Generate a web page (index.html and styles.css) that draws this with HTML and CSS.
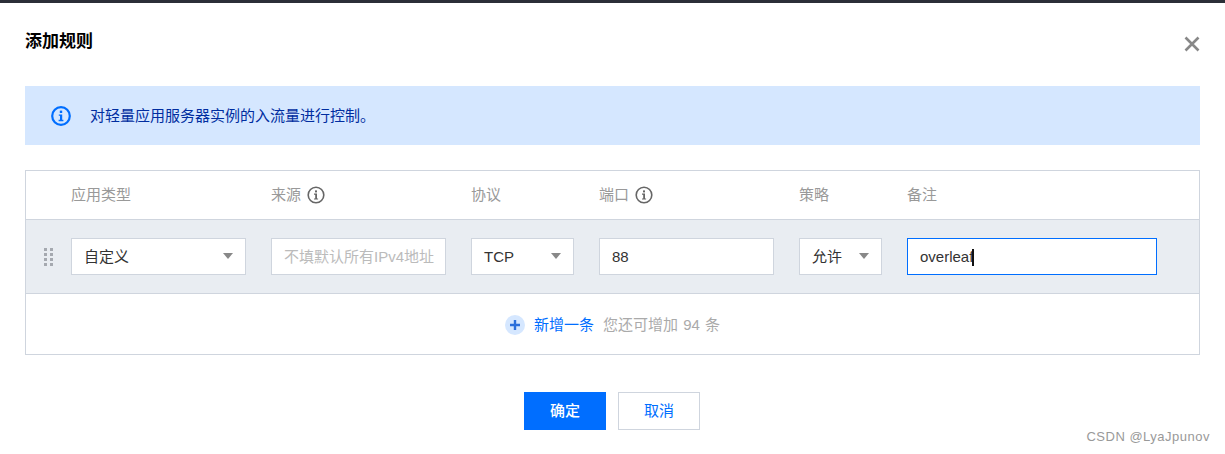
FILE: index.html
```html
<!doctype html>
<html>
	<head>
		<meta charset="utf-8" />
		<title>添加规则</title>
		<link rel="stylesheet" href="styles.css">
	</head>
	<body>
		<div class="topbar"></div>
		<div class="dialog">
			<div class="dialog-head">
				<h3>添加规则</h3>
				<svg class="close" width="16" height="16" viewBox="0 0 16 16"><path d="M1.5 1.5l13 13M14.5 1.5l-13 13" fill="none" stroke="#888" stroke-width="2.6"/></svg>
			</div>
			<div class="alert">
				<svg class="alert-icon" width="20" height="20" viewBox="0 0 20 20"><circle cx="10" cy="10" r="8.8" fill="none" stroke="#006eff" stroke-width="2.2"/><rect x="8.8" y="4.6" width="2.4" height="2.4" fill="#006eff"/><path d="M7.8 8.4h3.4v5.4h1.2v1.4H7.6v-1.4h1.4V9.8H7.8z" fill="#006eff"/></svg>
				<span>对轻量应用服务器实例的入流量进行控制。</span>
			</div>
			<div class="rules">
				<div class="line line-head">
					<div class="col col-type">应用类型</div>
					<div class="col col-source">来源
						<svg class="tip" width="18" height="18" viewBox="0 0 18 18"><circle cx="9" cy="9" r="7.8" fill="none" stroke="#666" stroke-width="1.6"/><rect x="8" y="4.4" width="2" height="2" fill="#666"/><path d="M7 7.6h3v4.8h1.1v1.2H7v-1.2h1.2V8.8H7z" fill="#666"/></svg>
					</div>
					<div class="col col-proto">协议</div>
					<div class="col col-port">端口
						<svg class="tip" width="18" height="18" viewBox="0 0 18 18"><circle cx="9" cy="9" r="7.8" fill="none" stroke="#666" stroke-width="1.6"/><rect x="8" y="4.4" width="2" height="2" fill="#666"/><path d="M7 7.6h3v4.8h1.1v1.2H7v-1.2h1.2V8.8H7z" fill="#666"/></svg>
					</div>
					<div class="col col-policy">策略</div>
					<div class="col col-note">备注</div>
				</div>
				<div class="line line-row">
					<svg class="grip" width="10" height="18" viewBox="0 0 10 18"><path d="M0 0h3v3H0zM6 0h3v3H6zM0 5h3v3H0zM6 5h3v3H6zM0 10h3v3H0zM6 10h3v3H6zM0 15h3v3H0zM6 15h3v3H6z" fill="#a5a9b0"/></svg>
					<div class="col col-type field">自定义<i class="arrow"></i></div>
					<div class="col col-source field placeholder">不填默认所有IPv4地址</div>
					<div class="col col-proto field">TCP<i class="arrow"></i></div>
					<div class="col col-port field">88</div>
					<div class="col col-policy field">允许<i class="arrow"></i></div>
					<div class="col col-note field focus">overleaf<i class="caret"></i></div>
				</div>
				<div class="add-line">
					<span class="add-icon"><svg width="12" height="12" viewBox="0 0 12 12"><path d="M6 1v10M1 6h10" stroke="#2a6fdb" stroke-width="2.4"/></svg></span>
					<a class="add-link">新增一条</a>
					<span class="add-hint">您还可增加 94 条</span>
				</div>
			</div>
			<div class="actions">
				<a class="btn btn-primary">确定</a>
				<a class="btn">取消</a>
			</div>
		</div>
		<div class="mark">CSDN @LyaJpunov</div>
	</body>
</html>
```

FILE: styles.css
```css
html, body, div, h3 { margin: 0; padding: 0; }
body { width: 1225px; height: 454px; overflow: hidden; position: relative; background: #fff; font: 15px/20px "Liberation Sans", "Noto Sans CJK SC", sans-serif; color: #333; }

.topbar { height: 3px; background: #2b2f38; }

.dialog { padding: 0 25px; }
.dialog-head { display: flex; justify-content: space-between; align-items: flex-start; height: 83px; }
.dialog-head h3 { margin-top: 28px; font-size: 17px; line-height: 22px; font-weight: bold; color: #000; }
.close { margin-top: 33px; }

.alert { display: flex; align-items: center; height: 59px; padding-left: 26px; background: #d5e7ff; color: #002da0; }
.alert-icon { margin-right: 19px; }

.rules { margin-top: 25px; border: 1px solid #cfd5de; height: 183px; }
.line { display: flex; padding-left: 45px; column-gap: 25px; position: relative; }
.line-head { height: 48px; align-items: center; color: #999; border-bottom: 1px solid #cfd5de; }
.line-row { height: 73px; align-items: center; background: #e9edf2; border-bottom: 1px solid #cfd5de; }

.col-type, .col-source, .col-port { width: 175px; }
.col-proto { width: 103px; }
.col-policy { width: 83px; }
.col-note { width: 250px; }

.line-head .col { display: flex; align-items: center; gap: 6px; }

.grip { position: absolute; left: 18px; top: 28px; }
.field { box-sizing: border-box; height: 37px; line-height: 36px; padding: 0 12px; background: #fff; border: 1px solid #cfd5de; position: relative; white-space: nowrap; overflow: hidden; }
.placeholder { color: #bbb; }
.focus { border-color: #006eff; }
.arrow { position: absolute; right: 12px; top: 14px; width: 0; height: 0; border-left: 5px solid transparent; border-right: 5px solid transparent; border-top: 6px solid #888; }
.caret { display: inline-block; width: 2px; height: 17px; margin-left: -1px; background: #111; vertical-align: -4px; }

.add-line { display: flex; justify-content: center; align-items: center; height: 61px; }
.add-icon { display: flex; align-items: center; justify-content: center; width: 20px; height: 20px; margin-right: 9px; border-radius: 50%; background: #d5e7ff; }
.add-link { color: #006eff; margin-right: 9px; }
.add-hint { color: #aaa; word-spacing: 1px; }

.actions { display: flex; justify-content: center; gap: 12px; margin-top: 37px; padding-right: 1px; }
.btn { box-sizing: border-box; width: 82px; height: 38px; line-height: 36px; text-align: center; border: 1px solid #cfd5de; color: #006eff; }
.btn-primary { background: #006eff; border-color: #006eff; color: #fff; font-weight: 500; }

.mark { position: absolute; right: 15px; bottom: 9px; font-size: 13px; line-height: 16px; letter-spacing: 0.5px; color: #999; }
```
